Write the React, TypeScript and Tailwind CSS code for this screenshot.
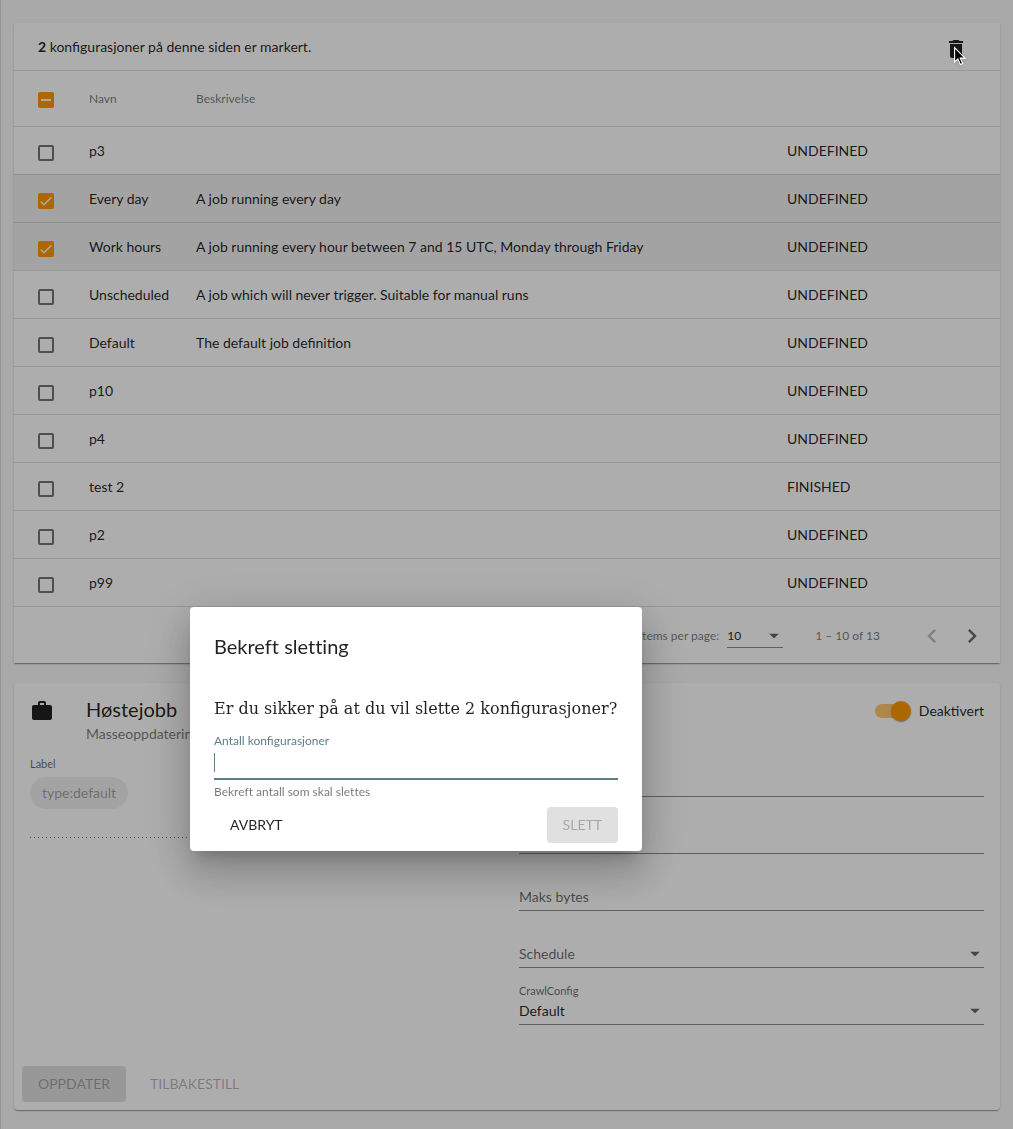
import { useState } from "react";
import type { ReactNode } from "react";

type Job = { name: string; description: string; state: string; selected?: boolean };

const jobs: Job[] = [
  { name: "p3", description: "", state: "UNDEFINED" },
  { name: "Every day", description: "A job running every day", state: "UNDEFINED", selected: true },
  {
    name: "Work hours",
    description: "A job running every hour between 7 and 15 UTC, Monday through Friday",
    state: "UNDEFINED",
    selected: true,
  },
  {
    name: "Unscheduled",
    description: "A job which will never trigger. Suitable for manual runs",
    state: "UNDEFINED",
  },
  { name: "Default", description: "The default job definition", state: "UNDEFINED" },
  { name: "p10", description: "", state: "UNDEFINED" },
  { name: "p4", description: "", state: "UNDEFINED" },
  { name: "test 2", description: "", state: "FINISHED" },
  { name: "p2", description: "", state: "UNDEFINED" },
  { name: "p99", description: "", state: "UNDEFINED" },
];

const cardShadow =
  "shadow-[0_2px_1px_-1px_rgba(0,0,0,0.2),0_1px_1px_0_rgba(0,0,0,0.14),0_1px_3px_0_rgba(0,0,0,0.12)]";

function Checkbox({
  label,
  checked,
  mixed,
  onChange,
}: {
  label: string;
  checked: boolean;
  mixed?: boolean;
  onChange?: () => void;
}) {
  return (
    <span className="mt-1 grid size-4">
      <input
        type="checkbox"
        aria-label={label}
        checked={checked}
        onChange={onChange ?? (() => undefined)}
        className="col-start-1 row-start-1 size-4 appearance-none rounded-[2px] border-2 border-black/54 checked:border-[#ff9800] checked:bg-[#ff9800]"
      />
      {checked && (
        <svg
          viewBox="0 0 24 24"
          className="pointer-events-none col-start-1 row-start-1 size-4"
          fill="none"
          stroke="#fafafa"
          aria-hidden="true"
        >
          {mixed ? (
            <path d="M4.5 12h15" strokeWidth="3" />
          ) : (
            <path d="M4.1 12.7 9 17.6 20.3 6.3" strokeWidth="2.13" />
          )}
        </svg>
      )}
    </span>
  );
}

function DropArrow() {
  return (
    <svg
      viewBox="0 0 10 5"
      className="pointer-events-none absolute top-1/2 right-1 h-[5px] w-[10px] -translate-y-1/2"
      aria-hidden="true"
    >
      <path d="M0 0h10L5 5z" fill="rgba(0,0,0,0.6)" />
    </svg>
  );
}

function Chevron({ d, className }: { d: string; className: string }) {
  return (
    <svg viewBox="0 0 24 24" className={`size-7 ${className}`} fill="currentColor" aria-hidden="true">
      <path d={d} />
    </svg>
  );
}

function Field({ label, children }: { label?: string; children: ReactNode }) {
  return (
    <div className="flex h-[57px] flex-col justify-end border-b border-black/45">
      {label && (
        <label htmlFor="crawl" className="text-[11px] leading-4 text-black/60">
          {label}
        </label>
      )}
      <div className="relative my-[3px] flex h-[19px] items-center">{children}</div>
    </div>
  );
}

function JobTable() {
  const [selected, setSelected] = useState(jobs.map((job) => Boolean(job.selected)));
  const count = selected.filter(Boolean).length;
  const toggle = (index: number) =>
    setSelected(selected.map((value, i) => (i === index ? !value : value)));

  return (
    <section className={`bg-white ${cardShadow}`}>
      <div className="flex h-12 items-center justify-between border-b border-black/12 pr-8 pl-6">
        <p>
          <b>{count}</b> konfigurasjoner på denne siden er markert.
        </p>
        <button type="button" aria-label="Slett" className="mt-1">
          <svg viewBox="0 0 24 24" className="size-6" fill="currentColor" aria-hidden="true">
            <path d="M6 19c0 1.1.9 2 2 2h8c1.1 0 2-.9 2-2V7H6v12zM19 4h-3.500l-1-1h-5l-1 1H5v2h14V4z" />
          </svg>
        </button>
      </div>
      <table className="w-full table-fixed border-collapse text-left">
        <colgroup>
          <col className="w-[75px]" />
          <col className="w-[107px]" />
          <col />
          <col className="w-[213px]" />
        </colgroup>
        <thead>
          <tr className="h-[55px] border-b border-black/12 text-xs text-black/54">
            <th className="pl-6">
              <Checkbox label="Velg alle" checked={count > 0} mixed={count < jobs.length} />
            </th>
            <th className="pt-0.5 font-normal">Navn</th>
            <th className="pt-0.5 font-normal">Beskrivelse</th>
            <th aria-label="Status" />
          </tr>
        </thead>
        <tbody>
          {jobs.map((job, index) => (
            <tr
              key={job.name}
              className={`h-12 border-b border-black/12 ${selected[index] ? "bg-black/6" : ""}`}
            >
              <td className="pt-0.5 pl-6">
                <Checkbox
                  label={`Velg ${job.name}`}
                  checked={selected[index]}
                  onChange={() => toggle(index)}
                />
              </td>
              <td className="pt-0.5">{job.name}</td>
              <td className="pt-0.5">{job.description}</td>
              <td className="pt-0.5">{job.state}</td>
            </tr>
          ))}
        </tbody>
      </table>
      <div className="flex h-14 items-center justify-end pt-0.5 pr-2 text-xs text-black/54">
        <label htmlFor="page-size">Items per page:</label>
        <div className="relative mt-0.5 mr-8 ml-2 w-14 border-b border-black/45">
          <select
            id="page-size"
            defaultValue="10"
            className="h-[22px] w-full appearance-none text-black/87"
          >
            <option>10</option>
            <option>25</option>
          </select>
          <DropArrow />
        </div>
        <span className="mr-8">1 – 10 of 13</span>
        <button type="button" aria-label="Forrige side" disabled className="grid size-10 place-items-center">
          <Chevron className="text-black/26" d="M15.410 7.410 14 6l-6 6 6 6 1.410-1.410L10.830 12z" />
        </button>
        <button type="button" aria-label="Neste side" className="grid size-10 place-items-center">
          <Chevron className="text-black/60" d="M10 6 8.590 7.410 13.170 12l-4.580 4.590L10 18l6-6z" />
        </button>
      </div>
    </section>
  );
}

function JobForm() {
  return (
    <section className={`rounded bg-white ${cardShadow}`}>
      <header className="flex items-start px-4 pt-4">
        <svg viewBox="0 0 24 24" className="mr-8 size-6" fill="currentColor" aria-hidden="true">
          <path d="M20 6h-4V4c0-1.110-.89-2-2-2h-4c-1.110 0-2 .89-2 2v2H4c-1.110 0-1.990.89-1.990 2L2 19c0 1.110.89 2 2 2h16c1.110 0 2-.89 2-2V8c0-1.110-.89-2-2-2zm-6 0h-4V4h4v2z" />
        </svg>
        <div className="flex-1">
          <h2 className="text-xl leading-5">Høstejobb</h2>
          <p className="mt-[3px] leading-6 text-black/54">Masseoppdatering</p>
        </div>
        <label className="mt-0.5 flex items-center gap-2">
          <span className="relative flex h-5 w-9 items-center">
            <input
              type="checkbox"
              role="switch"
              defaultChecked
              className="h-3.5 w-9 appearance-none rounded-full bg-[#ff9800]/54"
            />
            <span className="pointer-events-none absolute right-0 size-5 rounded-full bg-[#ff9800] shadow-[0_2px_1px_-1px_rgba(0,0,0,0.2),0_1px_1px_0_rgba(0,0,0,0.14),0_1px_3px_0_rgba(0,0,0,0.12)]" />
          </span>
          Deaktivert
        </label>
      </header>
      <div className="grid grid-cols-2 gap-6 px-4">
        <div className="pt-2.5">
          <p className="text-[11px] leading-4 text-black/60">Label</p>
          <span className="mt-[5px] inline-flex h-8 items-center rounded-full bg-black/6 px-3 text-black/35">
            type:default
          </span>
          <div className="mt-7 h-px bg-[linear-gradient(to_right,rgba(0,0,0,0.5)_0,rgba(0,0,0,0.5)_33%,transparent_0)] bg-size-[4px_100%]" />
        </div>
        <div>
          <div className="-mt-1.5">
            <Field>
              <input aria-label="Maks varighet" className="w-full outline-none" />
            </Field>
          </div>
          <Field>
            <input aria-label="Maks dokumenter" className="w-full outline-none" />
          </Field>
          <Field>
            <input
              aria-label="Maks bytes"
              placeholder="Maks bytes"
              className="w-full outline-none placeholder:text-black/60"
            />
          </Field>
          <Field>
            <select aria-label="Schedule" className="w-full appearance-none text-black/60">
              <option>Schedule</option>
            </select>
            <DropArrow />
          </Field>
          <Field label="CrawlConfig">
            <select id="crawl" className="w-full appearance-none text-black/87">
              <option>Default</option>
            </select>
            <DropArrow />
          </Field>
        </div>
      </div>
      <footer className="flex items-center gap-2 px-2 pt-[41px] pb-2">
        <button type="button" disabled className="h-9 rounded bg-black/12 px-4 text-black/30">
          OPPDATER
        </button>
        <button type="button" disabled className="h-9 px-4 text-black/30">
          TILBAKESTILL
        </button>
      </footer>
    </section>
  );
}

function ConfirmDialog() {
  return (
    <div className="fixed inset-0 bg-black/32">
      <svg
        viewBox="0 0 14 21"
        className="absolute top-[46px] left-[954px] h-[21px] w-[14px] drop-shadow-sm"
        aria-hidden="true"
      >
        <path
          d="M.6 1.500v14.500l3.300-3.100 2.500 5.700 2.300-1-2.500-5.500h4.800z"
          fill="#000"
          stroke="#fff"
          strokeWidth="1.100"
        />
      </svg>
      <div
        role="dialog"
        aria-modal="true"
        aria-labelledby="dialog-title"
        className="absolute top-[607px] left-[190px] min-w-[452px] rounded bg-white px-6 pt-6 pb-2 shadow-[0_11px_15px_-7px_rgba(0,0,0,0.2),0_24px_38px_3px_rgba(0,0,0,0.14),0_9px_46px_8px_rgba(0,0,0,0.12)]"
      >
        <h2
          id="dialog-title"
          className="text-xl leading-[30px] [font-variant-ligatures:none]"
        >
          Bekreft sletting
        </h2>
        <p className="mt-[34px] font-['DejaVu_Serif',serif] text-base leading-7">
          Er du sikker på at du vil slette 2 konfigurasjoner?
        </p>
        <label htmlFor="amount" className="mt-2.5 block text-xs leading-4 text-[#607d8b]">
          Antall konfigurasjoner
        </label>
        <div className="relative mt-1 flex h-[27px] items-start border-b-2 border-[#607d8b]">
          <input id="amount" className="h-5 w-full caret-transparent outline-none" />
          <span className="absolute top-0 left-0 h-[19px] w-px bg-[#607d8b]" />
        </div>
        <p className="mt-1 text-xs leading-4 text-black/54 [font-variant-ligatures:none]">
          Bekreft antall som skal slettes
        </p>
        <div className="mt-[7px] flex justify-between">
          <button type="button" className="h-9 px-4">
            AVBRYT
          </button>
          <button type="button" disabled className="h-9 rounded bg-black/12 px-4 text-black/26">
            SLETT
          </button>
        </div>
      </div>
    </div>
  );
}

export default function App() {
  return (
    <div className="min-h-screen border-l border-black/12 bg-[#fafafa] font-[Lato,sans-serif] text-sm text-black/87">
      <main className="flex flex-col gap-5 px-[13px] pt-[23px] pb-4">
        <JobTable />
        <JobForm />
      </main>
      <ConfirmDialog />
    </div>
  );
}
